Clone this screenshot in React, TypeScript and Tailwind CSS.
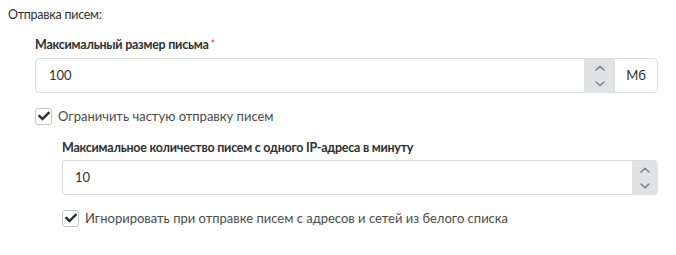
import React, { useState } from 'react';
import { FaCheck } from 'react-icons/fa';

const Chevron = ({ dir }: { dir: 'up' | 'down' }) => (
  <svg width="10" height="6" viewBox="0 0 10 6" className="block">
    <path
      d={dir === 'up' ? 'M1 5 L5 1.3 L9 5' : 'M1 1 L5 4.7 L9 1'}
      fill="none"
      stroke="#7d7f83"
      strokeWidth="1.5"
      strokeLinecap="round"
      strokeLinejoin="round"
    />
  </svg>
);

const Spinner = ({ width, last }: { width: string; last?: boolean }) => (
  <div className={`${width} ${last ? 'rounded-r-[4px]' : ''} bg-[#e1e2e4] flex flex-col items-center justify-center gap-[10px] shrink-0`}>
    <Chevron dir="up" />
    <Chevron dir="down" />
  </div>
);

const Checkbox = ({ checked, onClick, label }: { checked: boolean; onClick: () => void; label: string }) => (
  <label onClick={onClick} className="flex items-center gap-[6px] cursor-pointer select-none">
    <span className="w-[17px] h-[17px] rounded-[3px] border border-[#c8c9cc] bg-white flex items-center justify-center shrink-0">
      {checked && <FaCheck className="text-[#2f3033] w-[12px] h-[12px]" />}
    </span>
    <span className="text-[13px] leading-[18px] text-[#4a4b4e]">{label}</span>
  </label>
);

export default function App() {
  const [limit, setLimit] = useState(true);
  const [ignore, setIgnore] = useState(true);

  return (
    <div className="w-[676px] h-[255px] bg-white text-[#2f3033] font-['Lato','Noto_Sans',sans-serif] text-[13px] overflow-hidden">
      {/* Заголовок секции */}
      <div className="pt-[6px] pl-[8px] leading-[18px] text-[12.5px] tracking-[-0.25px]">Отправка писем:</div>

      <div className="ml-[35px] w-[623px] mt-[12px]">
        <div className="font-bold leading-[18px] text-[12.5px] tracking-[-0.25px]">
          Максимальный размер письма<sup className="text-[#e0424f] font-normal text-[11px] ml-[2px] relative -top-[1px]">*</sup>
        </div>
        <div className="mt-[4px] h-[35px] flex border border-[#dcdde0] rounded-[4px] overflow-hidden">
          <div className="flex-1 flex items-center px-[13px] text-[13px] text-[#2f3033]">100</div>
          <Spinner width="w-[31px]" />
          <div className="w-[42px] flex items-center justify-center text-[#2f3033]">Мб</div>
        </div>

        <div className="mt-[14px]">
          <Checkbox checked={limit} onClick={() => setLimit(!limit)} label="Ограничить частую отправку писем" />
        </div>

        <div className="ml-[27px] mt-[14px]">
          <div className="font-bold leading-[18px] text-[12.5px] tracking-[-0.25px]">Максимальное количество писем с одного IP-адреса в минуту</div>
          <div className="mt-[3px] h-[35px] flex border border-[#dcdde0] border-r-0 rounded-[4px] overflow-hidden">
            <div className="flex-1 flex items-center px-[12px] text-[#2f3033]">10</div>
            <Spinner width="w-[26px]" last />
          </div>
          <div className="mt-[14px]">
            <Checkbox
              checked={ignore}
              onClick={() => setIgnore(!ignore)}
              label="Игнорировать при отправке писем с адресов и сетей из белого списка"
            />
          </div>
        </div>
      </div>
    </div>
  );
}
